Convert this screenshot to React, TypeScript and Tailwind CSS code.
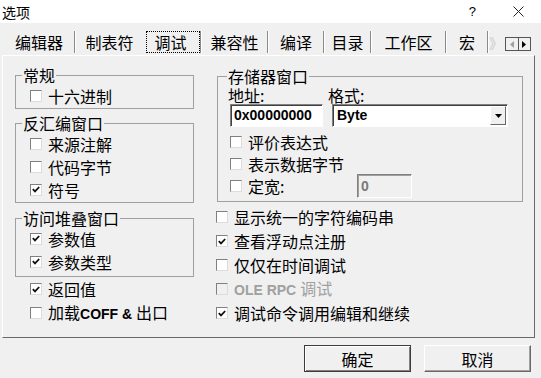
import type { ReactNode } from "react";
import clsx from "clsx";

const latin = "font-['Liberation_Sans',Arial,sans-serif] font-bold text-[14px]";

const Box = ({ checked, disabled }: { checked?: boolean; disabled?: boolean }) => (
    <span
        className={clsx(
            "flex h-[12px] w-[12px] shrink-0 items-center justify-center border border-t-[#808080] border-l-[#808080] border-r-[#dcdcdc] border-b-[#dcdcdc]",
            disabled ? "bg-[#f0f0f0]" : "bg-white"
        )}
    >
        {checked && (
            <svg width="8" height="7" viewBox="0 0 8 7">
                <path d="M0.8 3.2 L3 5.4 L7.2 1" stroke="#111" strokeWidth="1.8" fill="none" />
            </svg>
        )}
    </span>
);

const Check = ({
    label,
    checked,
    disabled,
    className,
}: {
    label: ReactNode;
    checked?: boolean;
    disabled?: boolean;
    className?: string;
}) => (
    <div className={clsx("flex items-center gap-[6px]", className)}>
        <Box checked={checked} disabled={disabled} />
        <span className={clsx("leading-[18px]", disabled && "text-[#a0a0a0]")}>{label}</span>
    </div>
);

const Group = ({ title, className, children }: { title: string; className?: string; children: ReactNode }) => (
    <fieldset className={clsx("border border-[#a0a0a0]", className)}>
        <legend className="ml-[6px] px-[1px] leading-[18px]">{title}</legend>
        {children}
    </fieldset>
);

const Sep = () => <div className="h-[22px] w-[2px] border-l border-l-[#8a8a8a] border-r border-r-white" />;

const Tab = ({ label, w, active }: { label: string; w: string; active?: boolean }) => (
    <div
        className={clsx(
            "flex h-[22px] items-center justify-center text-[16px] leading-[18px]",
            w,
            active && "border border-dotted border-black pr-[5px]"
        )}
    >
        {label}
    </div>
);

export default function App() {
    return (
        <div className="flex h-[378px] w-[541px] flex-col overflow-hidden bg-[#f0f0f0] font-['Noto_Sans_CJK_SC',sans-serif] text-[16px] text-black">
            {/* title bar */}
            <div className="flex h-[23px] items-center bg-white">
                <span className="pl-[2px] text-[14px] leading-[16px]">选项</span>
                <span className="ml-auto mr-[37px] font-['Liberation_Sans',sans-serif] text-[13px]">?</span>
                <svg width="11" height="11" viewBox="0 0 11 11" className="mr-[17px]">
                    <path d="M0.5 0.5 L10.5 10.5 M10.5 0.5 L0.5 10.5" stroke="#222" strokeWidth="1" />
                </svg>
            </div>

            {/* tabs */}
            <div className="flex h-[32px] items-start pl-[4px] pt-[8px]">
                <Tab label="编辑器" w="w-[70px]" />
                <Sep />
                <Tab label="制表符" w="w-[67px]" />
                <div className="w-[3px]" />
                <Tab label="调试" w="w-[54px]" active />
                <Sep />
                <Tab label="兼容性" w="w-[65px]" />
                <Sep />
                <Tab label="编译" w="w-[54px]" />
                <Sep />
                <Tab label="目录" w="w-[45px]" />
                <Sep />
                <Tab label="工作区" w="w-[73px]" />
                <Sep />
                <Tab label="宏" w="w-[40px]" />
                <Sep />
                <div className="flex h-[22px] w-[14px] items-center justify-center overflow-hidden text-[14px] text-[#c8c8c8]">》</div>
                <div className="ml-[2px] mt-[6px] flex h-[14px] w-[26px] border border-[#555]">
                    <div className="flex flex-1 items-center justify-center border-r border-[#555] bg-[#f0f0f0]">
                        <svg width="4" height="7" viewBox="0 0 4 7">
                            <path d="M4 0 L0 3.5 L4 7 Z" fill="#a0a0a0" />
                        </svg>
                    </div>
                    <div className="flex flex-1 items-center justify-center bg-[#f0f0f0]">
                        <svg width="4" height="7" viewBox="0 0 4 7">
                            <path d="M0 0 L4 3.5 L0 7 Z" fill="#000" />
                        </svg>
                    </div>
                </div>
            </div>

            {/* panel */}
            <div className="ml-[2px] flex h-[283px] w-[533px] border border-l-white border-t-white border-r-[#696969] border-b-[#696969]">
                {/* left column */}
                <div className="flex w-[191px] flex-col pl-[12px]">
                    <Group title="常规" className="mt-[10px] w-[179px]">
                        <div className="pb-[1px] pl-[14px] pt-[1px]">
                            <Check label="十六进制" className="h-[22px]" />
                        </div>
                    </Group>
                    <Group title="反汇编窗口" className="mt-[5px] w-[179px]">
                        <div className="pb-[1px] pl-[14px]">
                            <Check label="来源注解" className="h-[23px]" />
                            <Check label="代码字节" className="h-[23px]" />
                            <Check label="符号" checked className="h-[23px]" />
                        </div>
                    </Group>
                    <Group title="访问堆叠窗口" className="mt-[6px] w-[179px]">
                        <div className="pb-[3px] pl-[14px]">
                            <Check label="参数值" checked className="h-[23px]" />
                            <Check label="参数类型" checked className="h-[23px]" />
                        </div>
                    </Group>
                    <div className="pl-[15px]">
                        <Check label="返回值" checked className="h-[24px]" />
                        <Check
                            label={
                                <>
                                    加载<span className={latin}>COFF &amp; </span>出口
                                </>
                            }
                            className="h-[24px]"
                        />
                    </div>
                </div>

                {/* right column */}
                <div className="ml-[23px] flex flex-col">
                    <Group title="存储器窗口" className="mt-[11px] w-[306px] [&>legend]:ml-[9px]">
                        <div className="pb-[4px] pl-[12px]">
                            <div className="flex h-[19px] items-center leading-[18px]">
                                <span className="-ml-[2px] w-[100px]">地址:</span>
                                <span>格式:</span>
                            </div>
                            <div className="flex h-[23px]">
                                <div
                                    className={clsx(
                                        "flex w-[93px] items-center border border-t-[#808080] border-l-[#808080] border-b-white border-r-white bg-white pl-[3px] shadow-[inset_1px_1px_0_#404040]",
                                        latin
                                    )}
                                >
                                    0x00000000
                                </div>
                                <div className="ml-[9px] flex w-[176px] items-center border border-t-[#808080] border-l-[#808080] border-b-white border-r-white bg-white shadow-[inset_1px_1px_0_#404040]">
                                    <span className={clsx("flex-1 pl-[4px]", latin)}>Byte</span>
                                    <div className="mr-[1px] flex h-[19px] w-[16px] items-center justify-center border border-t-white border-l-white border-b-[#696969] border-r-[#696969] bg-[#f0f0f0]">
                                        <svg width="7" height="4" viewBox="0 0 7 4">
                                            <path d="M0 0 L7 0 L3.5 4 Z" fill="#000" />
                                        </svg>
                                    </div>
                                </div>
                            </div>
                            <div className="mt-[4px]">
                                <Check label="评价表达式" className="h-[22px]" />
                                <Check label="表示数据字节" className="h-[22px]" />
                                <div className="flex h-[22px] items-center">
                                    <Check label="定宽:" className="w-[127px]" />
                                    <div
                                        className={clsx(
                                            "flex h-[24px] w-[55px] shrink-0 items-center border border-t-[#808080] border-l-[#808080] border-b-white border-r-white bg-[#f0f0f0] pl-[3px] text-[#7a7a7a] shadow-[inset_1px_1px_0_#a0a0a0]",
                                            latin
                                        )}
                                    >
                                        0
                                    </div>
                                </div>
                            </div>
                        </div>
                    </Group>
                    <div className="-ml-[1px] mt-[3px]">
                        <Check label="显示统一的字符编码串" className="h-[24px]" />
                        <Check label="查看浮动点注册" checked className="h-[24px]" />
                        <Check label="仅仅在时间调试" className="h-[24px]" />
                        <Check
                            label={
                                <>
                                    <span className={latin}>OLE RPC </span>调试
                                </>
                            }
                            disabled
                            className="h-[24px]"
                        />
                        <Check label="调试命令调用编辑和继续" checked className="h-[24px]" />
                    </div>
                </div>
            </div>

            {/* buttons */}
            <div className="mt-[7px] flex justify-end gap-[13px] pr-[10px]">
                <button className="flex h-[27px] w-[107px] items-center justify-center border border-[#3c3c3c] bg-[#f0f0f0] shadow-[inset_1px_1px_0_#fff,inset_-1px_-1px_0_#808080] leading-[18px]">
                    确定
                </button>
                <button className="flex h-[27px] w-[107px] items-center justify-center border border-t-white border-l-white border-b-[#696969] border-r-[#696969] bg-[#f0f0f0] shadow-[inset_-1px_-1px_0_#a0a0a0] leading-[18px]">
                    取消
                </button>
            </div>
        </div>
    );
}
